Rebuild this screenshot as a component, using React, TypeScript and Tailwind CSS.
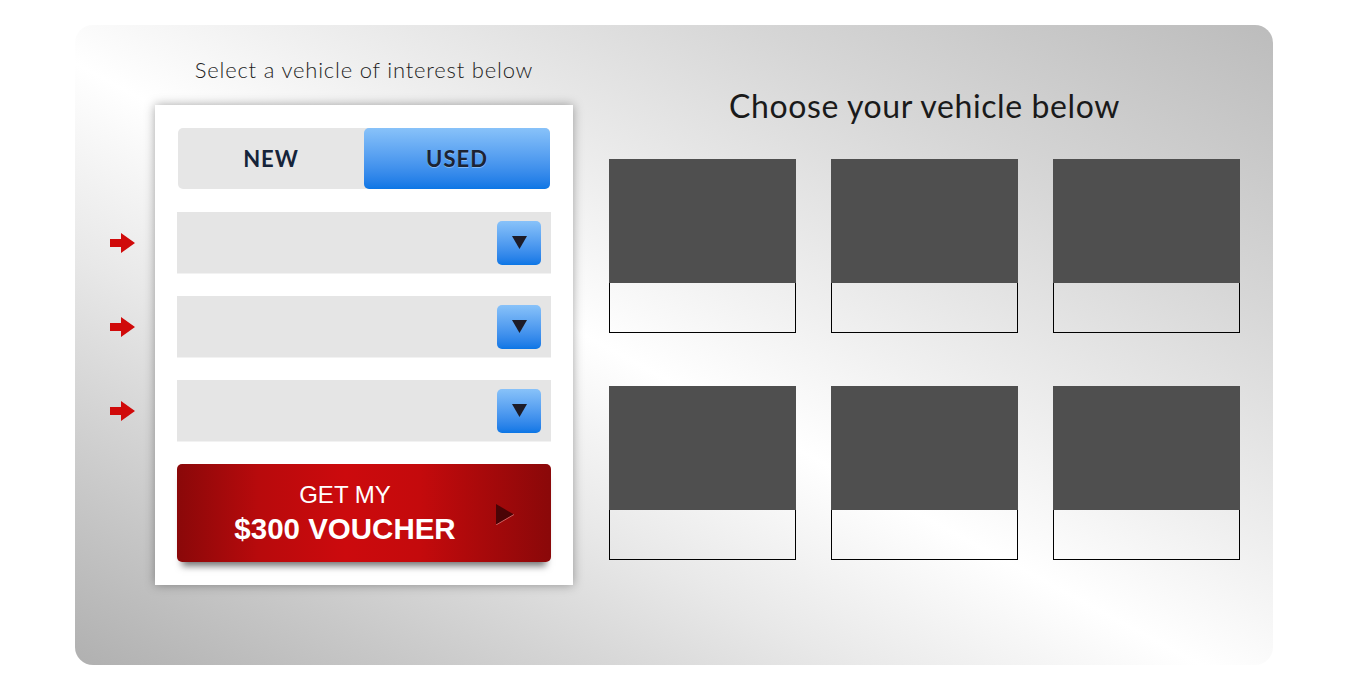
import React from "react";

function RedArrow() {
  return (
    <svg width="26" height="20" viewBox="0 0 26 20" className="block">
      <path d="M0 6 H11 V0 L25 10 L11 20 V14 H0 Z" fill="#d00a0a" />
    </svg>
  );
}

function Dropdown() {
  return (
    <div className="relative">
      <div className="absolute -left-[67px] top-[21px]">
        <RedArrow />
      </div>
      <div className="h-[61px] bg-[#e5e5e5] flex items-center justify-end pr-[10px] shadow-[0_1px_0_#f2f2f2]">
        <div className="w-[44px] h-[44px] rounded-[5px] bg-gradient-to-b from-[#88c2f9] to-[#0a76e5] flex items-center justify-center">
          <svg width="15" height="13" viewBox="0 0 15 13">
            <path d="M0 0 H15 L7.5 13 Z" fill="#1d1c28" />
          </svg>
        </div>
      </div>
    </div>
  );
}

function VehicleCard() {
  return (
    <div className="w-[187px] flex flex-col">
      <div className="h-[124px] bg-[#4f4f4f]" />
      <div className="h-[50px] border border-t-0 border-black" />
    </div>
  );
}

export default function App() {
  return (
    <div className="w-[1348px] h-[690px] bg-white pt-[25px] pl-[75px]">
      <div className="w-[1198px] h-[640px] rounded-[18px] bg-[linear-gradient(to_bottom_left,#bcbcbc_0%,#d6d6d6_22%,#f0f0f0_42%,#ffffff_53%,#e8e8e8_68%,#c8c8c8_86%,#b0b0b0_100%)] flex pl-[80px] pt-[25px] gap-[36px]">
        {/* left column */}
        <div className="w-[418px] flex flex-col">
          <p className="h-[55px] pt-[8px] text-center text-[22px] leading-[24px] font-light text-[#1e1e1e] font-['Lato',sans-serif] tracking-[0.8px]">
            Select a vehicle of interest below
          </p>
          <div className="bg-white h-[480px] shadow-[0_0_10px_rgba(0,0,0,0.35)] px-[22px] pt-[23px] flex flex-col gap-[23px]">
            <div className="flex h-[61px] rounded-[5px] bg-[#e6e6e6] mx-[1px]">
              <div className="flex-1 flex items-center justify-center font-['Lato',sans-serif] font-bold text-[22px] tracking-[1px] text-[#16243a]">
                NEW
              </div>
              <div className="flex-1 rounded-[5px] bg-gradient-to-b from-[#88c2f9] to-[#0a76e5] flex items-center justify-center font-['Lato',sans-serif] font-bold text-[22px] tracking-[1px] text-[#1c2333] [text-shadow:0_1px_0_rgba(255,255,255,0.35)]">
                USED
              </div>
            </div>
            <Dropdown />
            <Dropdown />
            <Dropdown />
            <div className="h-[98px] rounded-[5px] bg-[linear-gradient(to_right,#8a0809_0%,#b80a0c_22%,#cc0a0d_45%,#c40a0c_65%,#8a0809_100%)] shadow-[0_9px_7px_-5px_rgba(0,0,0,0.55)] flex items-center pl-[56px]">
              <div className="w-[224px] flex flex-col items-center text-white font-['Liberation_Sans',Arial,sans-serif]">
                <span className="block text-[24px] leading-[32px] font-normal">GET MY</span>
                <span className="block text-[29.5px] leading-[36px] font-bold">$300 VOUCHER</span>
              </div>
              <svg width="18" height="21" viewBox="0 0 18 21" className="ml-[39px] mt-[2px]">
                <path d="M0 0 L18 10.5 L0 21 Z" fill="#4a0406" />
                <path d="M18 10.5 L0 21" stroke="#d06060" strokeWidth="1" />
              </svg>
            </div>
          </div>
        </div>

        {/* right column */}
        <div className="w-[631px] flex flex-col">
          <h2 className="h-[109px] pt-[39px] text-center text-[32px] leading-[34px] font-normal text-[#1a1a1a] font-['Lato',sans-serif] tracking-[0.6px]">
            Choose your vehicle below
          </h2>
          <div className="grid grid-cols-[187px_187px_187px] justify-between gap-y-[53px]">
            <VehicleCard />
            <VehicleCard />
            <VehicleCard />
            <VehicleCard />
            <VehicleCard />
            <VehicleCard />
          </div>
        </div>
      </div>
    </div>
  );
}
